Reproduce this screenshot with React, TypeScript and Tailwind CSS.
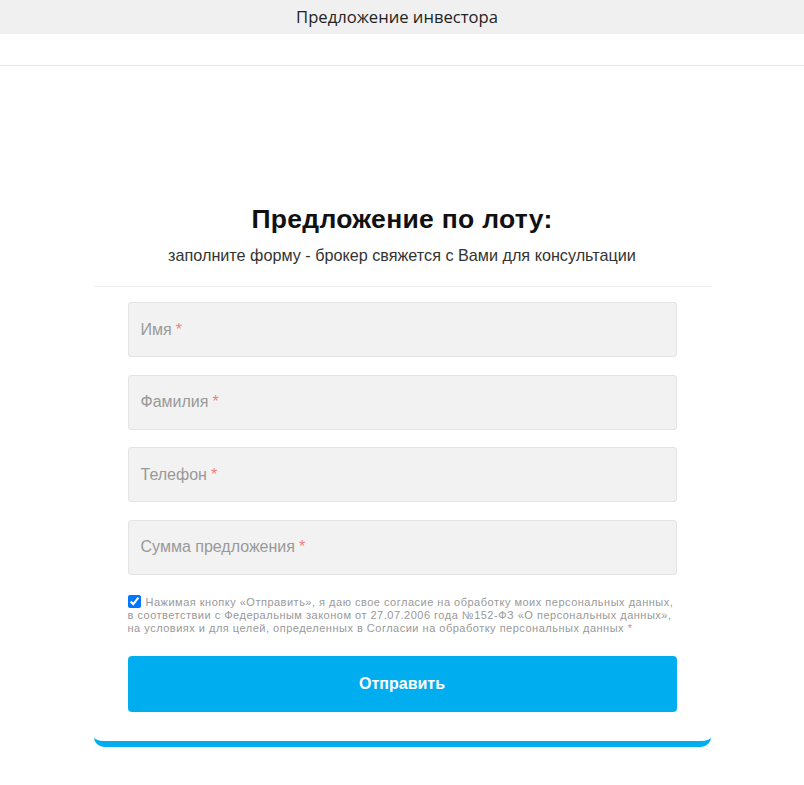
import React from "react";

const fields = ["Имя", "Фамилия", "Телефон", "Сумма предложения"];

export default function App() {
  return (
    <div className="min-h-[785px] bg-white" style={{ fontFamily: '"Liberation Sans", Arial, sans-serif' }}>
      <div
        className="h-[34px] bg-[#f0f0f0] flex items-center justify-center pr-[10px] text-[16.6px] text-[#222]"
        style={{ fontFamily: '"Open Sans", sans-serif' }}
      >
        Предложение инвестора
      </div>
      <div className="h-[32px] border-b border-[#e6e6e6]" />
      <div className="pt-[138px] flex justify-center">
        <div className="w-[617px] rounded-b-[10px] border-b-[6px] border-[#00aeef] pb-[29px]">
          <h1 className="text-[26.5px] leading-[30px] font-bold text-[#111] text-center tracking-[0.3px]">
            Предложение по лоту:
          </h1>
          <p className="mt-[11px] text-[16.2px] leading-[20px] text-[#333] text-center">
            заполните форму - брокер свяжется с Вами для консультации
          </p>
          <div className="mt-[21px] border-t border-[#eeeeee]" />
          <div className="px-[34px] pt-[15px] flex flex-col gap-[17.5px]">
            {fields.map((f) => (
              <div
                key={f}
                className="h-[55px] rounded-[3px] bg-[#f2f2f2] border border-[#e4e4e4] flex items-center px-[12px] text-[16px] text-[#999]"
              >
                {f}
                <span className="ml-[4px] text-[#f08080]">*</span>
              </div>
            ))}
          </div>
          <div className="px-[34px] mt-[20px] text-[11px] leading-[13px] tracking-[0.5px] text-[#999]">
            <input
              type="checkbox"
              defaultChecked
              className="w-[13px] h-[13px] align-[-2px] mr-[5px] accent-[#0075ff]"
            />
            Нажимая кнопку «Отправить», я даю свое согласие на обработку моих персональных данных, в соответствии с
            Федеральным законом от 27.07.2006 года №152-ФЗ «О персональных данных», на условиях и для целей,
            определенных в Согласии на обработку персональных данных <span className="text-[#f08080]">*</span>
          </div>
          <div className="px-[34px] mt-[21px]">
            <button className="w-full h-[56px] rounded-[4px] bg-[#00aeef] text-white font-bold text-[16px]">
              Отправить
            </button>
          </div>
        </div>
      </div>
    </div>
  );
}
